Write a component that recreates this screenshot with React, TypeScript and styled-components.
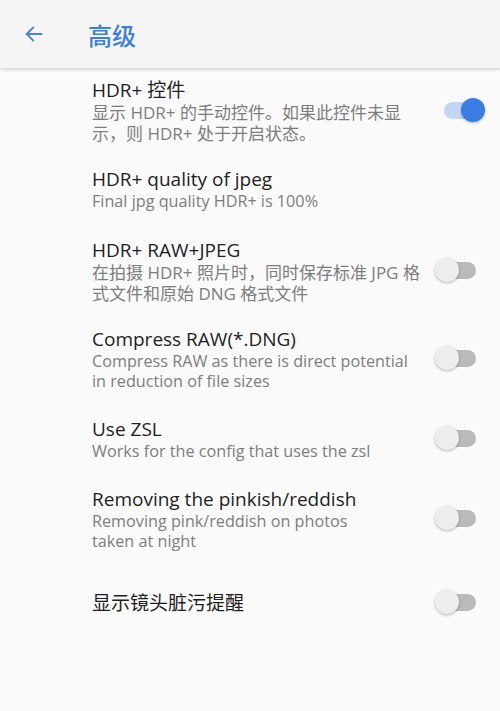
import React, { FC, useState } from 'react';
import styled, { createGlobalStyle } from 'styled-components';

const GlobalStyle = createGlobalStyle`
  html, body {
    margin: 0;
    padding: 0;
    background: #fafafa;
  }
  body {
    font-family: 'Open Sans', 'Noto Sans CJK SC', sans-serif;
  }
`;

const Page = styled.div`
  width: 500px;
  min-height: 711px;
  background: #fafafa;
`;

const Toolbar = styled.header`
  position: relative;
  z-index: 1;
  display: flex;
  align-items: center;
  height: 68px;
  background: #f5f5f5;
  box-shadow: 0 1px 4px rgba(0, 0, 0, 0.22);
`;

const BackButton = styled.button`
  display: flex;
  align-items: center;
  justify-content: center;
  width: 68px;
  height: 68px;
  padding: 0;
  border: 0;
  background: transparent;
`;

const Title = styled.h1`
  margin: 0 0 0 20px;
  font-family: 'Noto Sans CJK SC', sans-serif;
  font-size: 24px;
  font-weight: 500;
  color: #3f7fd6;
`;

const List = styled.div`
  display: flex;
  flex-direction: column;
`;

const Row = styled.div<{ $single?: boolean; $cjk?: boolean }>`
  display: flex;
  align-items: center;
  padding: ${({ $single, $cjk }) =>
    $single ? '22px 15px 20px 92px' : $cjk ? '10px 15px 14px 92px' : '9px 15px 17px 92px'};
`;

const Texts = styled.div`
  width: 330px;
  margin-right: 13px;
`;

const ItemTitle = styled.div`
  font-size: 19px;
  line-height: 24px;
  color: #1e1e1e;
`;

const ItemSummary = styled.div<{ $cjk?: boolean }>`
  font-size: ${({ $cjk }) => ($cjk ? '17px' : '16.2px')};
  line-height: ${({ $cjk }) => ($cjk ? '21px' : '20px')};
  color: #7d7d7d;
  white-space: pre-line;
`;

const SwitchBox = styled.div`
  position: relative;
  width: 50px;
  height: 26px;
  flex-shrink: 0;
`;

const Track = styled.div<{ $on: boolean }>`
  position: absolute;
  left: 9px;
  right: 9px;
  top: 4px;
  height: 17px;
  border-radius: 9px;
  background: ${({ $on }) => ($on ? '#c3d6f4' : '#bababa')};
`;

const Thumb = styled.div<{ $on: boolean }>`
  position: absolute;
  top: 0;
  left: ${({ $on }) => ($on ? '26px' : '0')};
  width: 24px;
  height: 24px;
  border-radius: 50%;
  background: ${({ $on }) => ($on ? '#3b7ee3' : '#ededed')};
  box-shadow: 0 1px 3px rgba(0, 0, 0, 0.28);
`;

const Toggle: FC<{ initial: boolean }> = ({ initial }) => {
  const [on, setOn] = useState(initial);
  return (
    <SwitchBox onClick={() => setOn(!on)}>
      <Track $on={on} />
      <Thumb $on={on} />
    </SwitchBox>
  );
};

type Item = { title: string; summary?: string; cjk?: boolean; toggle?: boolean };

const items: Item[] = [
  { title: 'HDR+ 控件', summary: '显示 HDR+ 的手动控件。如果此控件未显示，则 HDR+ 处于开启状态。', cjk: true, toggle: true },
  { title: 'HDR+ quality of jpeg', summary: 'Final jpg quality HDR+ is 100%' },
  { title: 'HDR+ RAW+JPEG', summary: '在拍摄 HDR+ 照片时，同时保存标准 JPG 格式文件和原始 DNG 格式文件', cjk: true, toggle: false },
  { title: 'Compress RAW(*.DNG)', summary: 'Compress RAW as there is direct potential in reduction of file sizes', toggle: false },
  { title: 'Use ZSL', summary: 'Works for the config that uses the zsl', toggle: false },
  { title: 'Removing the pinkish/reddish', summary: 'Removing pink/reddish on photos\ntaken at night', toggle: false },
  { title: '显示镜头脏污提醒', toggle: false },
];

const App: FC = () => (
  <>
    <GlobalStyle />
    <Page>
      <Toolbar>
        <BackButton aria-label="back">
          <svg width="22" height="22" viewBox="0 0 24 24" fill="none" stroke="#4a86d4" strokeWidth="2.2" strokeLinecap="square">
            <path d="M20 12H5" />
            <path d="M11 5l-7 7 7 7" />
          </svg>
        </BackButton>
        <Title>高级</Title>
      </Toolbar>
      <List>
        {items.map((item) => (
          <Row key={item.title} $single={!item.summary} $cjk={item.cjk}>
            <Texts>
              <ItemTitle>{item.title}</ItemTitle>
              {item.summary && <ItemSummary $cjk={item.cjk}>{item.summary}</ItemSummary>}
            </Texts>
            {item.toggle !== undefined && <Toggle initial={item.toggle} />}
          </Row>
        ))}
      </List>
    </Page>
  </>
);

export default App;
